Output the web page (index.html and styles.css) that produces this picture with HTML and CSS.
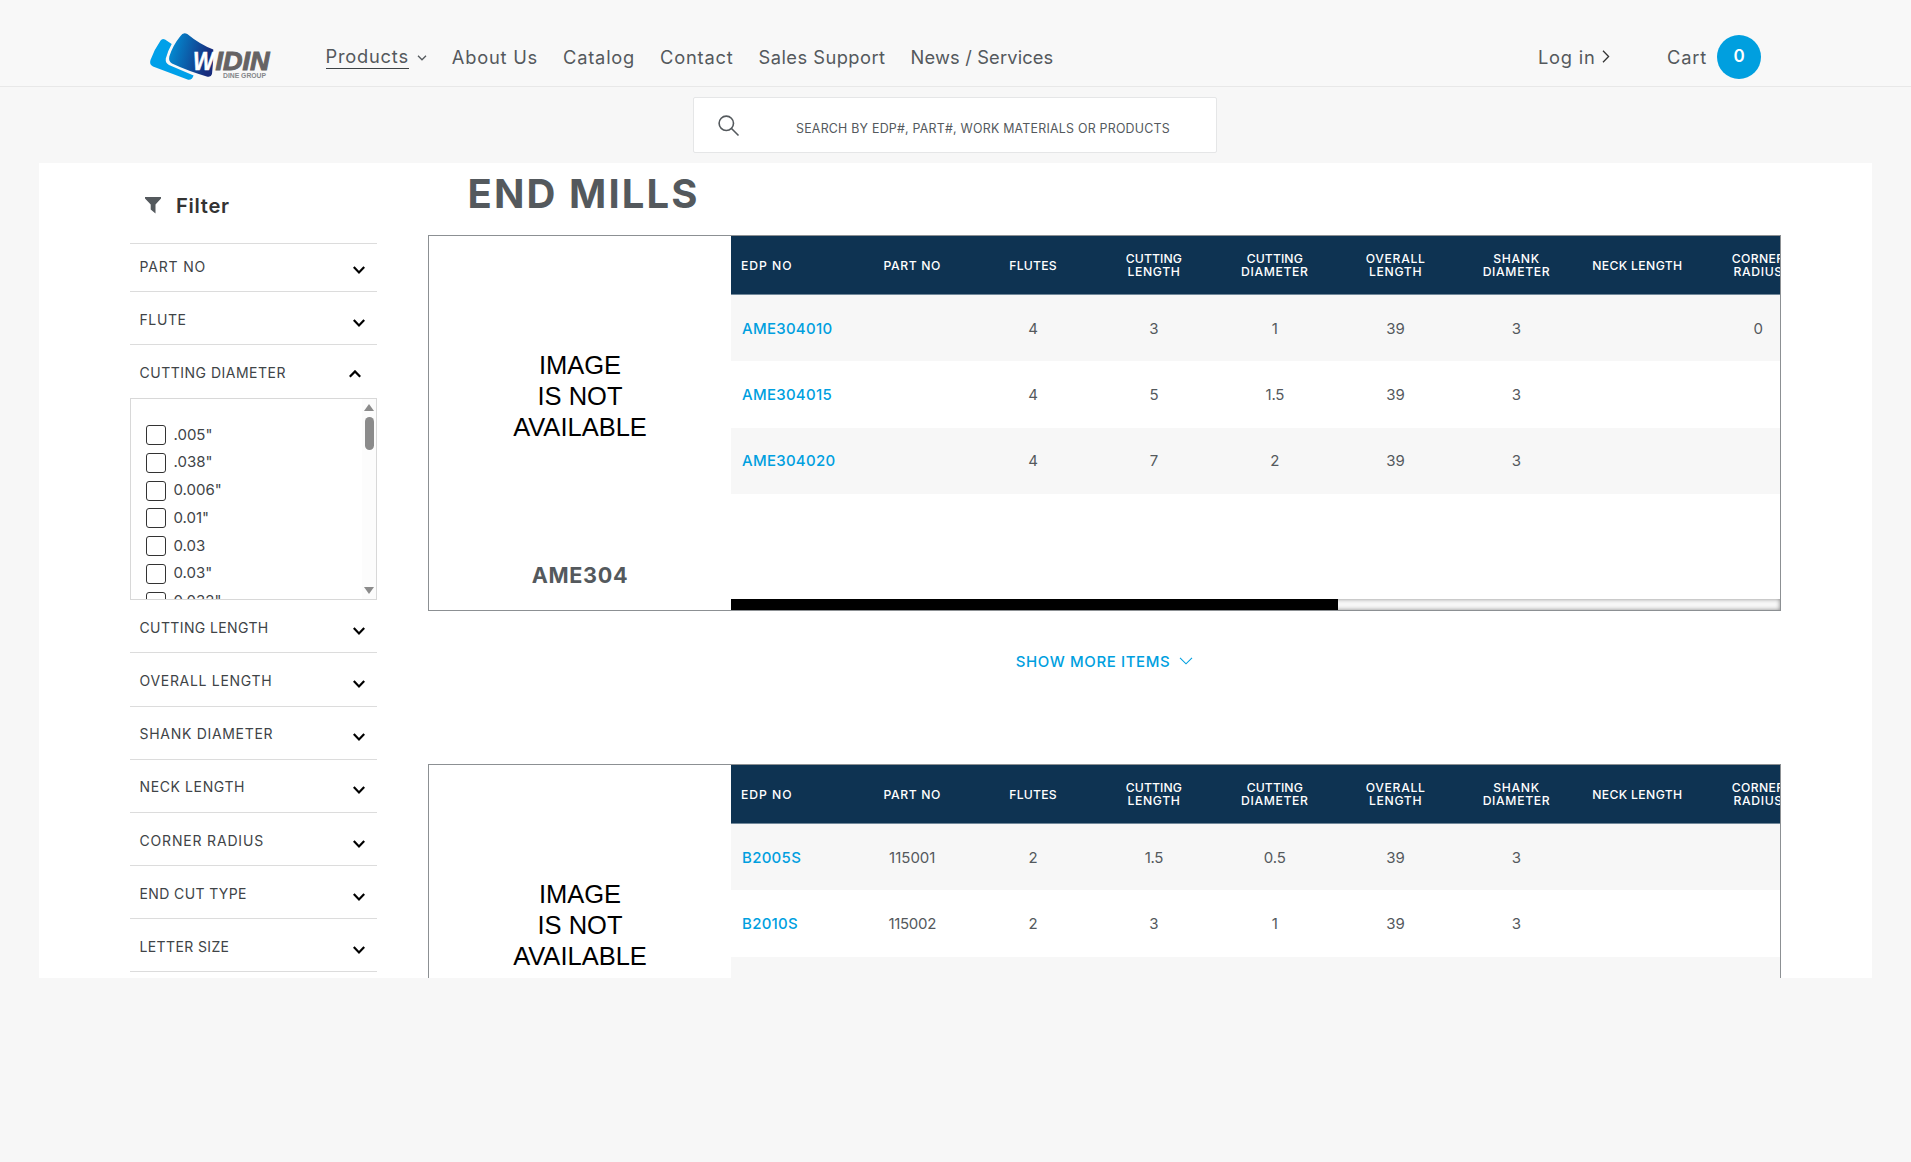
FILE: index.html
```html
<!DOCTYPE html>
<html lang="en">
<head>
<meta charset="utf-8">
<title>End Mills</title>
<link rel="stylesheet" href="styles.css">
</head>
<body>
<header class="header">
  <a class="logo">
    <svg width="124" height="50" viewBox="0 0 124 50">
      <defs><linearGradient id="lg" x1="0" y1="0" x2="1" y2="0.25"><stop offset="0" stop-color="#0096dc"/><stop offset="1" stop-color="#172b7c"/></linearGradient></defs>
      <path fill="#00a0e9" d="M11.600 8.600Q13.300 6 16 7.600L22.700 12Q19 18.500 16.800 26.500Q16.200 31 20 33L44.600 43.600Q43 48.600 38.500 47.600L4 34.500Q0 32.500 1.500 28Q5 18 11.600 8.600Z"/>
      <path fill="url(#lg)" d="M31.500 4Q34 0 38.300 2Q51 12.500 64.300 17.500Q64.500 31 63 42Q62 45.500 58.500 44.700Q39 39 23 31.500Q19.300 29.500 20.300 24.500Q24 13 31.500 4Z"/>
      <text class="logo-w" x="44" y="37.500" textLength="21" lengthAdjust="spacingAndGlyphs">W</text>
      <text class="logo-name" x="66.500" y="37.500" textLength="54" lengthAdjust="spacingAndGlyphs">IDIN</text>
      <text class="logo-sub" x="74" y="46.300" textLength="43" lengthAdjust="spacingAndGlyphs">DINE GROUP</text>
    </svg>
  </a>
  <nav class="nav">
    <a class="nav-item active"><span class="nav-label">Products</span><svg width="10" height="6" viewBox="0 0 10 6"><path d="M1 .8 5 4.800 9 .8"/></svg></a>
    <a class="nav-item">About Us</a>
    <a class="nav-item">Catalog</a>
    <a class="nav-item">Contact</a>
    <a class="nav-item mid">Sales Support</a>
    <a class="nav-item tight">News / Services</a>
  </nav>
  <div class="account">
    <a class="login">Log in<svg width="8" height="13" viewBox="0 0 8 13"><path d="M1 .7 6.600 6.500 1 12.300"/></svg></a>
    <a class="cart">Cart<span class="count">0</span></a>
  </div>
</header>

<div class="search">
  <svg width="22" height="22" viewBox="0 0 22 22"><circle cx="8.300" cy="8.300" r="7.200"/><path d="M13.500 13.500 20.500 20.500"/></svg>
  <span class="search-text">SEARCH BY EDP#, PART#, WORK MATERIALS OR PRODUCTS</span>
</div>

<main class="panel">
  <aside class="filters">
    <h2 class="filter-title"><svg width="16" height="17" viewBox="0 0 16 17"><path d="M0 0H16V1.400L10.500 7.500V16.500L5.700 12.500V7.500L0 1.400Z"/></svg>Filter</h2>
    <div class="filter first"><span class="f8">PART NO</span><svg class="chev" viewBox="0 0 12 8"><path d="M.8 1 6 6.400 11.200 1"/></svg></div>
    <div class="filter"><span class="f6">FLUTE</span><svg class="chev" viewBox="0 0 12 8"><path d="M.8 1 6 6.400 11.200 1"/></svg></div>
    <div class="filter open"><span class="f5">CUTTING DIAMETER</span><svg class="chev up" viewBox="0 0 12 8"><path d="M.8 6.800 6 1.400 11.200 6.800"/></svg></div>
    <div class="options">
      <ul class="list">
        <li><i class="box"></i>.005"</li>
        <li><i class="box"></i>.038"</li>
        <li><i class="box"></i>0.006"</li>
        <li><i class="box"></i>0.01"</li>
        <li><i class="box"></i>0.03</li>
        <li><i class="box"></i>0.03"</li>
        <li><i class="box"></i>0.032"</li>
      </ul>
      <div class="vbar"><i class="arrow-up"></i><i class="thumb"></i><i class="arrow-down"></i></div>
    </div>
    <div class="filter"><span class="f4">CUTTING LENGTH</span><svg class="chev" viewBox="0 0 12 8"><path d="M.8 1 6 6.400 11.200 1"/></svg></div>
    <div class="filter"><span class="f7">OVERALL LENGTH</span><svg class="chev" viewBox="0 0 12 8"><path d="M.8 1 6 6.400 11.200 1"/></svg></div>
    <div class="filter"><span class="f7">SHANK DIAMETER</span><svg class="chev" viewBox="0 0 12 8"><path d="M.8 1 6 6.400 11.200 1"/></svg></div>
    <div class="filter"><span class="f6">NECK LENGTH</span><svg class="chev" viewBox="0 0 12 8"><path d="M.8 1 6 6.400 11.200 1"/></svg></div>
    <div class="filter"><span class="f8">CORNER RADIUS</span><svg class="chev" viewBox="0 0 12 8"><path d="M.8 1 6 6.400 11.200 1"/></svg></div>
    <div class="filter"><span class="f4">END CUT TYPE</span><svg class="chev" viewBox="0 0 12 8"><path d="M.8 1 6 6.400 11.200 1"/></svg></div>
    <div class="filter"><span class="f4">LETTER SIZE</span><svg class="chev" viewBox="0 0 12 8"><path d="M.8 1 6 6.400 11.200 1"/></svg></div>
  </aside>

  <section class="content">
    <h1 class="title">END MILLS</h1>

    <article class="card">
      <div class="product">
        <div class="noimage">IMAGE<br>IS NOT<br>AVAILABLE</div>
        <h3 class="name">AME304</h3>
      </div>
      <div class="table">
        <div class="row head">
          <span class="left w9">EDP NO</span><span class="w6">PART NO</span><span class="w2">FLUTES</span>
          <span><b class="w1">CUTTING</b><b>LENGTH</b></span><span><b class="w1">CUTTING</b><b>DIAMETER</b></span>
          <span><b>OVERALL</b><b>LENGTH</b></span><span><b>SHANK</b><b>DIAMETER</b></span>
          <span class="w3">NECK LENGTH</span><span><b class="w3">CORNER</b><b>RADIUS</b></span>
        </div>
        <div class="row"><a class="left">AME304010</a><span></span><span>4</span><span>3</span><span>1</span><span>39</span><span>3</span><span></span><span>0</span></div>
        <div class="row"><a class="left">AME304015</a><span></span><span>4</span><span>5</span><span class="narrow">1.5</span><span>39</span><span>3</span><span></span><span></span></div>
        <div class="row"><a class="left">AME304020</a><span></span><span>4</span><span>7</span><span>2</span><span>39</span><span>3</span><span></span><span></span></div>
        <div class="hbar"><i class="hthumb"></i></div>
      </div>
    </article>

    <a class="more">SHOW MORE ITEMS<svg width="14" height="8" viewBox="0 0 14 8"><path d="M1 .8 7 6.800 13 .8"/></svg></a>

    <article class="card">
      <div class="product">
        <div class="noimage">IMAGE<br>IS NOT<br>AVAILABLE</div>
      </div>
      <div class="table">
        <div class="row head">
          <span class="left w9">EDP NO</span><span class="w6">PART NO</span><span class="w2">FLUTES</span>
          <span><b class="w1">CUTTING</b><b>LENGTH</b></span><span><b class="w1">CUTTING</b><b>DIAMETER</b></span>
          <span><b>OVERALL</b><b>LENGTH</b></span><span><b>SHANK</b><b>DIAMETER</b></span>
          <span class="w3">NECK LENGTH</span><span><b class="w3">CORNER</b><b>RADIUS</b></span>
        </div>
        <div class="row"><a class="left">B2005S</a><span>115001</span><span>2</span><span class="narrow">1.5</span><span>0.5</span><span>39</span><span>3</span><span></span><span></span></div>
        <div class="row"><a class="left">B2010S</a><span class="narrow">115002</span><span>2</span><span>3</span><span>1</span><span>39</span><span>3</span><span></span><span></span></div>
        <div class="row"></div>
      </div>
    </article>
  </section>
</main>
</body>
</html>
```
FILE: styles.css
```css
* { box-sizing: border-box; }

html { overflow: hidden; }

body {
  margin: 0;
  height: 1162px;
  overflow: hidden;
  background: #f7f7f7;
  color: #54595d;
  font-family: Inter, sans-serif;
}

svg { display: block; flex: none; fill: none; }
h1, h2, h3, ul { margin: 0; padding: 0; list-style: none; }

/* Header */
.header {
  display: flex;
  align-items: center;
  height: 87px;
  padding: 27px 150px 0 149px;
  background: #f8f8f8;
  border-bottom: 1px solid #e8e8e8;
  font-size: 18.300px;
  letter-spacing: .780px;
  white-space: nowrap;
}
.logo { width: 177px; margin-top: 1px; }
.logo-w, .logo-name { font: italic bold 26px "Liberation Sans", sans-serif; letter-spacing: 0; }
.logo-w { fill: #fff; stroke: #fff; stroke-width: .5; }
.logo-name { fill: #666364; stroke: #666364; stroke-width: 1; }
.logo-sub { font: bold 6.6px "Liberation Sans", sans-serif; fill: #85878a; letter-spacing: 0; }

.nav { display: flex; gap: 25px; margin-left: -.5px; }
.nav-item { display: flex; align-items: center; }
.nav-item svg { margin: 3px 0 0 8px; stroke: #54595d; stroke-width: 1.3; }
.nav-label { line-height: 23px; box-shadow: 0 1px #3d4245; }
.mid { letter-spacing: .480px; }
.tight { letter-spacing: .150px; }

.account { display: flex; margin-left: auto; }
.login { display: flex; align-items: center; width: 129px; }
.login svg { margin-left: 6px; stroke: #333; stroke-width: 1.3; }
.cart { display: flex; align-items: center; width: 94px; height: 44px; justify-content: space-between; }
.count {
  width: 44px;
  height: 44px;
  border-radius: 50%;
  background: #009fdf;
  color: #fff;
  font-size: 17px;
  font-weight: 600;
  line-height: 43px;
  letter-spacing: 0;
  text-align: center;
}

/* Search */
.search {
  display: flex;
  width: 524px;
  height: 56px;
  margin: 10px 0 10px 693px;
  padding: 17px 0 0 24px;
  background: #fff;
  border: 1px solid #e5e6e7;
  border-radius: 2px;
}
.search svg { stroke: #54595d; stroke-width: 1.6; }
.search-text {
  margin: 5px 0 0 56px;
  font-size: 12.400px;
  line-height: 18px;
  letter-spacing: .230px;
  white-space: nowrap;
}

/* Panel */
.panel {
  display: flex;
  height: 815px;
  margin: 0 39px;
  padding-left: 91px;
  overflow: hidden;
  background: #fff;
}

.filters { width: 247px; flex: none; color: #404447; }
.filter-title {
  display: flex;
  align-items: center;
  gap: 15px;
  height: 81px;
  padding: 5px 0 0 15px;
  border-bottom: 1px solid #dcdcdc;
  color: #333;
  font-size: 20.200px;
  font-weight: 600;
  letter-spacing: .700px;
}
.filter-title svg { fill: #54595d; }
.filter {
  display: flex;
  align-items: flex-end;
  justify-content: space-between;
  height: 53.150px;
  padding: 0 12.500px 14.500px 9.500px;
  border-bottom: 1px solid #dcdcdc;
  font-size: 14px;
  line-height: 20px;
}
.filter.first { height: 48px; }
.filter.open { border: 0; height: 52.700px; padding-right: 16px; }
.chev { width: 12px; height: 8px; margin-bottom: 3px; stroke: #000; stroke-width: 2.200; }
.chev.up { margin-bottom: 5px; }
.f4 { letter-spacing: .38px; }
.f5 { letter-spacing: .5px; }
.f6 { letter-spacing: .61px; }
.f7 { letter-spacing: .7px; }
.f8 { letter-spacing: .82px; }

.options {
  display: flex;
  justify-content: space-between;
  height: 202.500px;
  overflow: hidden;
  border: 1px solid #d8d8d8;
}
.list { padding: 21.500px 0 0 15px; font-size: 15px; }
.list li { display: flex; align-items: center; gap: 7.500px; height: 27.750px; color: #404447; }
.box { width: 20px; height: 20px; margin-top: 2px; border: 1px solid #333; border-radius: 3px; }
.vbar {
  display: flex;
  flex-direction: column;
  align-items: center;
  width: 14px;
  padding: 5px 0;
  background: #fcfcfc;
}
.arrow-up { border: 5px solid transparent; border-top: 0; border-bottom: 7px solid #8b8b8b; }
.thumb { width: 9px; height: 33px; margin-top: 6px; border-radius: 5px; background: #8b8b8b; }
.arrow-down { margin-top: auto; border: 5px solid transparent; border-bottom: 0; border-top: 7px solid #8b8b8b; }

/* Products */
.content { width: 1353px; margin-left: 51px; flex: none; }
.title {
  height: 72px;
  padding: 7px 0 0 39.500px;
  font-size: 40px;
  font-weight: 700;
  line-height: 48px;
  letter-spacing: 2.100px;
}
.card {
  display: grid;
  grid-template-columns: 302px 1fr;
  height: 376px;
  border: 1px solid #8c9093;
  overflow: hidden;
}
.product { text-align: center; }
.noimage {
  padding-top: 113.500px;
  color: #000;
  font: 25.500px/31.300px "Liberation Sans", sans-serif;
}
.name { margin-top: 120px; font-size: 21.600px; line-height: 24px; letter-spacing: .700px; }

.table { display: flex; flex-direction: column; overflow: hidden; }
.row {
  display: grid;
  grid-template-columns: repeat(9, 120.850px);
  align-items: center;
  justify-items: center;
  flex: none;
  height: 66.300px;
  font-size: 15px;
}
.row:nth-child(even) { background: #f7f7f7; }
.left { justify-self: start; padding-left: 11px; }
.row a { color: #009fdf; font-weight: 500; letter-spacing: .280px; }
.narrow { letter-spacing: -.3px; }
.head {
  height: 59px;
  background: #0e3352;
  border-bottom: 1px solid #71889a;
  color: #fff;
  font-size: 12.200px;
  font-weight: 500;
  line-height: 13px;
  letter-spacing: .65px;
  text-align: center;
}
.head .left { padding-left: 10px; }
.head b { display: block; font-weight: 500; }
.head .w1 { letter-spacing: .1px; }
.head .w2 { letter-spacing: .24px; }
.head .w3 { letter-spacing: .36px; }
.head .w6 { letter-spacing: .63px; }
.head .w9 { letter-spacing: .94px; }

.hbar {
  height: 11px;
  margin-top: auto;
  background: #f7f7f7;
  box-shadow: inset 0 0 4px #888;
}
.hthumb { display: block; width: 607px; height: 11px; background: #000; }

.more {
  display: flex;
  justify-content: center;
  align-items: center;
  gap: 9px;
  height: 153px;
  padding-bottom: 53px;
  color: #009fdf;
  font-size: 15px;
  font-weight: 500;
  letter-spacing: .600px;
}
.more svg { stroke: #009fdf; stroke-width: 1.100; }
```
